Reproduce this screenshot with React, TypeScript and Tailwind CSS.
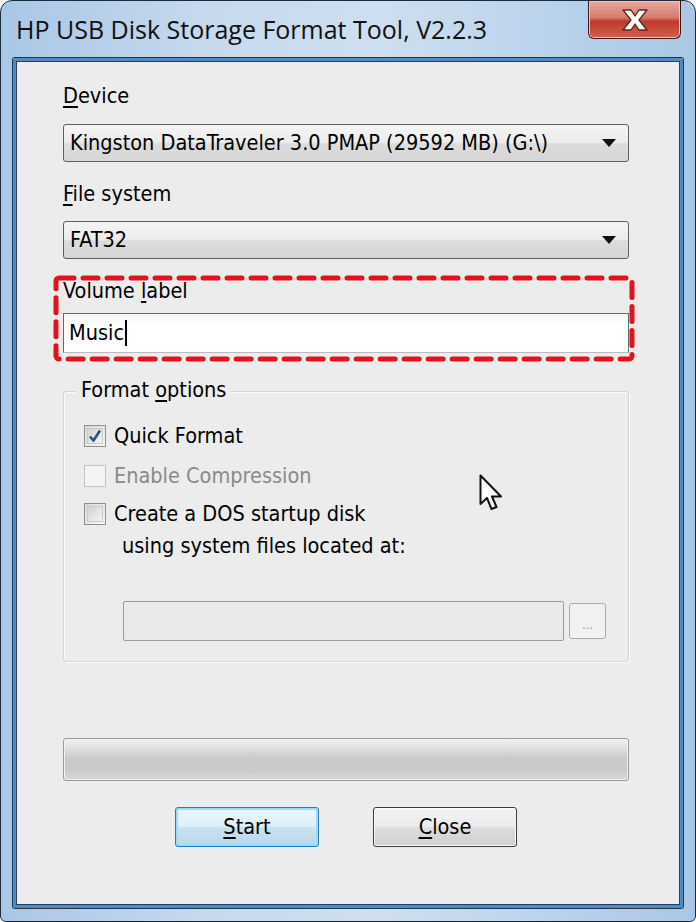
const dlgFont = { fontFamily: '"DejaVu Sans Condensed", "Liberation Sans", Arial, sans-serif' };

const ComboBox = ({ value }: { value: string }) => (
  <div className="flex h-[38px] items-center justify-between rounded-[3px] border border-[#5f5f5f] bg-[linear-gradient(to_bottom,#f4f4f4_0%,#ececec_48%,#dcdcdc_52%,#d6d6d6_100%)] pl-[6px] pr-[12px]">
    <span className="text-[21.5px] text-black">{value}</span>
    <svg width="14" height="8" viewBox="0 0 14 8">
      <path d="M0 0 H14 L7 8 Z" fill="#111" />
    </svg>
  </div>
);

const CheckBox = ({ checked, disabled }: { checked?: boolean; disabled?: boolean }) => (
  <div
    className={`flex h-[22px] w-[22px] items-center justify-center border ${
      disabled ? "border-[#c4c4c4] bg-[#f4f4f4]" : "border-[#8e8f8f] bg-[linear-gradient(135deg,#d8d8d8,#f7f7f7)]"
    }`}
  >
    {!disabled && (
      <div className="flex h-[16px] w-[16px] items-center justify-center border border-[#c9c9c9] bg-[linear-gradient(135deg,#d2d2d2,#f4f4f4)]">
        {checked && (
          <svg width="14" height="14" viewBox="0 0 14 14">
            <path d="M2 7.5 L5.5 11.5 L12 1.5" stroke="#2e4f86" strokeWidth="2.6" fill="none" strokeLinejoin="round" />
          </svg>
        )}
      </div>
    )}
  </div>
);

const Option = ({ label, checked, disabled }: { label: string; checked?: boolean; disabled?: boolean }) => (
  <div className="flex items-center gap-[8px]">
    <CheckBox checked={checked} disabled={disabled} />
    <span className={`text-[21.5px] leading-[28px] ${disabled ? "text-[#8a8a8a]" : "text-black"}`}>{label}</span>
  </div>
);

const PushButton = ({ children, primary }: { children: React.ReactNode; primary?: boolean }) => (
  <div
    className={`flex h-[40px] w-[144px] items-center justify-center rounded-[3px] border text-[21.5px] text-black ${
      primary
        ? "border-[#2b7ab0] bg-[linear-gradient(to_bottom,#eaf6fd_0%,#dceff9_48%,#c6e2f1_52%,#b7d8ea_100%)] shadow-[inset_0_0_0_2px_#9ddcf7]"
        : "border-[#3a3a3a] bg-[linear-gradient(to_bottom,#f4f4f4_0%,#ebebeb_48%,#dddddd_52%,#cfcfcf_100%)] shadow-[inset_0_0_0_1px_#fbfbfb]"
    }`}
  >
    {children}
  </div>
);

export default function App() {
  return (
    <div className="h-[922px] w-[696px] bg-white" style={dlgFont}>
      <div className="flex h-full w-full flex-col rounded-t-[12px] rounded-b-[6px] border border-[#1c2b3c] bg-[linear-gradient(to_right,#a9c7e6_0%,#c6d9ee_30%,#cddff0_55%,#a9c7e6_100%)]">
        {/* title bar */}
        <div className="flex h-[57px] items-start justify-between">
          <div
            className="pl-[15px] pt-[11px] text-[25px] leading-[34px] text-[#111]"
            style={{ fontFamily: '"Open Sans", "Noto Sans", sans-serif' }}
          >
            HP USB Disk Storage Format Tool, V2.2.3
          </div>
          <div className="mr-[14px] flex h-[38px] w-[93px] items-center justify-center rounded-b-[6px] border border-t-0 border-[#3a1a14] bg-[linear-gradient(to_bottom,#e9a99c_0%,#d67a6a_45%,#c0392b_55%,#d0604a_100%)] shadow-[inset_0_0_0_1px_#f2c5bc]">
            <svg width="32" height="26" viewBox="0 0 32 26">
              <path
                d="M4 3 L12 3 L16 9 L20 3 L28 3 L20 13 L28 23 L20 23 L16 17 L12 23 L4 23 L12 13 Z"
                fill="#fbfbfb"
                stroke="#5a2a24"
                strokeWidth="1.3"
                strokeLinejoin="round"
              />
            </svg>
          </div>
        </div>

        {/* client area */}
        <div className="mx-[12px] mb-[13px] flex-1 rounded-[2px] border-[3px] border-[#4f8cc4] shadow-[0_0_0_1px_#1c3550]">
          <div className="relative flex h-full flex-col border border-[#243d58] bg-[#ececec] pl-[46px] pr-[50px]">
            <div className="mt-[22px] text-[21.5px] leading-[24px] text-black">
              <span className="underline underline-offset-[3px]">D</span>evice
            </div>
            <div className="mt-[16px]">
              <ComboBox value="Kingston DataTraveler 3.0 PMAP (29592 MB) (G:\)" />
            </div>
            <div className="mt-[20px] text-[21.5px] leading-[24px] text-black">
              <span className="underline underline-offset-[3px]">F</span>ile system
            </div>
            <div className="mt-[15px]">
              <ComboBox value="FAT32" />
            </div>

            <div className="relative mt-[20px]">
              <div className="text-[21.5px] leading-[24px] text-black">
                Volume <span className="underline underline-offset-[3px]">l</span>abel
              </div>
              <div className="mt-[10px] flex h-[40px] items-center border border-[#5e6d78] border-b-[#b5bec5] bg-[linear-gradient(to_bottom,#f4f4f4,#ffffff_30%,#ffffff)] pl-[5px]">
                <span className="text-[21.5px] text-black">Music</span>
                <span className="ml-px h-[26px] w-[2px] bg-black" />
              </div>
              <svg className="absolute left-[-10px] top-[-4px]" width="582" height="87" viewBox="0 0 582 87">
                <rect
                  x="3"
                  y="3"
                  width="576"
                  height="81"
                  rx="3"
                  fill="none"
                  stroke="#e0141e"
                  strokeWidth="5"
                  strokeDasharray="15 9"
                  strokeLinecap="round"
                />
              </svg>
            </div>

            {/* format options group */}
            <div className="relative mt-[38px] h-[271px] rounded-[3px] border border-[#d5d5d5] shadow-[inset_1px_1px_0_#fbfbfb,1px_1px_0_#fbfbfb]">
              <div className="absolute left-[12px] top-[-14px] bg-[#ececec] px-[5px] text-[21.5px] leading-[24px] text-black">
                Format <span className="underline underline-offset-[3px]">o</span>ptions
              </div>
              <div className="flex flex-col pl-[20px] pt-[30px]">
                <Option label="Quick Format" checked />
                <div className="mt-[12px]">
                  <Option label="Enable Compression" disabled />
                </div>
                <div className="mt-[10px]">
                  <Option label="Create a DOS startup disk" />
                </div>
                <div className="ml-[38px] mt-[6px] text-[21.5px] leading-[24px] text-black">
                  using system files located at:
                </div>
                <div className="mt-[43px] flex items-center gap-[5px] pl-[39px]">
                  <div className="h-[40px] w-[441px] rounded-[2px] border border-[#9c9c9c] bg-[#eaeaea]" />
                  <div className="flex h-[36px] w-[37px] items-center justify-center rounded-[3px] border border-[#a8aaac] bg-[#f1f1f1] pt-[6px] text-[13px] leading-none text-[#9a9a9a]">
                    ...
                  </div>
                </div>
              </div>
            </div>

            {/* progress bar */}
            <div className="mt-[76px] h-[43px] rounded-[3px] border border-[#9a9a9a] bg-[linear-gradient(to_bottom,#f3f3f3_0%,#e2e2e2_20%,#cbcbcb_45%,#c9c9c9_75%,#d9d9d9_100%)] shadow-[inset_0_0_0_1px_#f2f2f2]" />

            <div className="mt-[26px] flex justify-center gap-[54px]">
              <PushButton primary>
                <span>
                  <span className="underline underline-offset-[3px]">S</span>tart
                </span>
              </PushButton>
              <PushButton>
                <span>
                  <span className="underline underline-offset-[3px]">C</span>lose
                </span>
              </PushButton>
            </div>

            {/* mouse pointer */}
            <svg className="absolute left-[462px] top-[412px]" width="26" height="40" viewBox="0 0 26 40">
              <path
                d="M1.5 1.5 L1.5 30 L8 24 L12.5 35 L17.5 33 L13 22.5 L22 22.5 Z"
                fill="#ffffff"
                stroke="#111"
                strokeWidth="2"
                strokeLinejoin="round"
              />
            </svg>
          </div>
        </div>
      </div>
    </div>
  );
}
